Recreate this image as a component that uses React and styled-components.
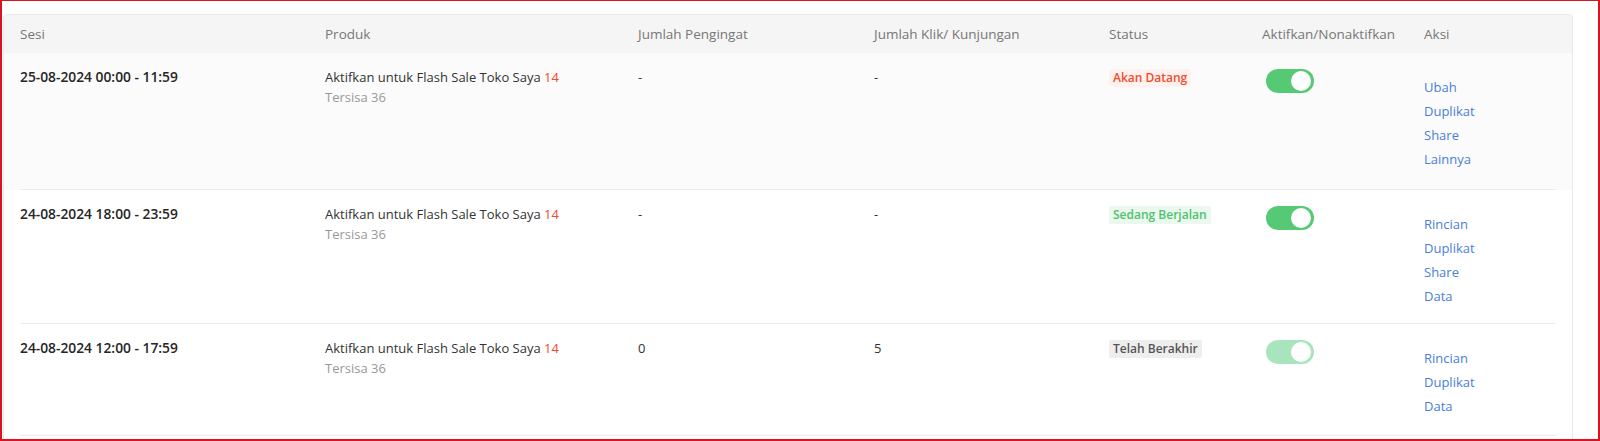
import React from "react"
import styled, { createGlobalStyle } from "styled-components"

const GlobalStyle = createGlobalStyle`
  html, body {
    margin: 0;
    padding: 0;
    background: #fff;
  }
  body {
    font-family: "Open Sans", "Noto Sans", sans-serif;
    -webkit-font-smoothing: antialiased;
  }
`

const COLUMNS = "305px 313px 236px 235px 153px 162px 1fr"

const Frame = styled.div`
  box-sizing: border-box;
  width: 1600px;
  height: 441px;
  overflow: hidden;
  border: 2px solid #d7141f;
  border-top-width: 1px;
  padding: 13px 25px 0 1px;
`

const Card = styled.div`
  border: 1px solid #e8e8e8;
  border-radius: 4px;
  background: #fff;
  overflow: hidden;
  min-height: 460px;
`

const HeaderRow = styled.div`
  display: grid;
  grid-template-columns: ${COLUMNS};
  align-items: center;
  height: 38px;
  padding: 0 16px;
  background: #f5f5f5;
  color: #777;
  font-size: 13.5px;
`

const Row = styled.div`
  padding: 0 16px;
  background: ${({ highlighted }) => (highlighted ? "#fbfbfb" : "#fff")};
`

const RowInner = styled.div`
  display: grid;
  grid-template-columns: ${COLUMNS};
  align-items: start;
  padding: 14px 0 ${({ pb }) => pb}px;
  border-bottom: 1px solid #ebebeb;
  font-size: 13px;
  line-height: 20px;
  color: #333;
`

const Session = styled.div`
  font-size: 13.8px;
  font-weight: 600;
  color: #262626;
`

const Product = styled.div`
  display: flex;
  flex-direction: column;
`

const Count = styled.span`
  color: #ee4d2d;
`

const Remaining = styled.span`
  color: #999;
`

const BADGE = {
  upcoming: { bg: "#fff1ee", fg: "#ee4d2d" },
  running: { bg: "#eaf8ee", fg: "#4fc26f" },
  ended: { bg: "#eeeeee", fg: "#555" },
}

const Badge = styled.span`
  display: inline-block;
  margin-top: 2px;
  padding: 0 4px;
  line-height: 18px;
  font-size: 12px;
  font-weight: 600;
  border-radius: 2px;
  background: ${({ kind }) => BADGE[kind].bg};
  color: ${({ kind }) => BADGE[kind].fg};
`

const Toggle = styled.span`
  position: relative;
  display: inline-block;
  width: 48px;
  height: 24px;
  margin: 2px 0 0 4px;
  border-radius: 12px;
  background: ${({ disabled }) => (disabled ? "#a8e5bc" : "#55c973")};

  &::after {
    content: "";
    position: absolute;
    top: 2px;
    right: 3px;
    width: 20px;
    height: 20px;
    border-radius: 50%;
    background: #fff;
  }
`

const Actions = styled.div`
  display: flex;
  flex-direction: column;
  padding-top: 8px;
`

const ActionLink = styled.a`
  color: #4a7ed8;
  line-height: 24px;
  text-decoration: none;
  cursor: pointer;
`

const rows = [
  {
    session: "25-08-2024 00:00 - 11:59",
    reminders: "-",
    clicks: "-",
    status: "upcoming",
    statusText: "Akan Datang",
    disabled: false,
    actions: ["Ubah", "Duplikat", "Share", "Lainnya"],
    highlighted: true,
    pb: 18,
  },
  {
    session: "24-08-2024 18:00 - 23:59",
    reminders: "-",
    clicks: "-",
    status: "running",
    statusText: "Sedang Berjalan",
    disabled: false,
    actions: ["Rincian", "Duplikat", "Share", "Data"],
    pb: 15,
  },
  {
    session: "24-08-2024 12:00 - 17:59",
    reminders: "0",
    clicks: "5",
    status: "ended",
    statusText: "Telah Berakhir",
    disabled: true,
    actions: ["Rincian", "Duplikat", "Data"],
    pb: 17,
  },
]

const App = () => (
  <>
    <GlobalStyle />
    <Frame>
      <Card>
        <HeaderRow>
          <span>Sesi</span>
          <span>Produk</span>
          <span>Jumlah Pengingat</span>
          <span>Jumlah Klik/ Kunjungan</span>
          <span>Status</span>
          <span>Aktifkan/Nonaktifkan</span>
          <span>Aksi</span>
        </HeaderRow>
        {rows.map((row) => (
          <Row key={row.session} highlighted={row.highlighted}>
            <RowInner pb={row.pb}>
              <Session>{row.session}</Session>
              <Product>
                <span>
                  Aktifkan untuk Flash Sale Toko Saya <Count>14</Count>
                </span>
                <Remaining>Tersisa 36</Remaining>
              </Product>
              <div>{row.reminders}</div>
              <div>{row.clicks}</div>
              <div>
                <Badge kind={row.status}>{row.statusText}</Badge>
              </div>
              <div>
                <Toggle disabled={row.disabled} />
              </div>
              <Actions>
                {row.actions.map((a) => (
                  <ActionLink key={a}>{a}</ActionLink>
                ))}
              </Actions>
            </RowInner>
          </Row>
        ))}
      </Card>
    </Frame>
  </>
)

export default App
